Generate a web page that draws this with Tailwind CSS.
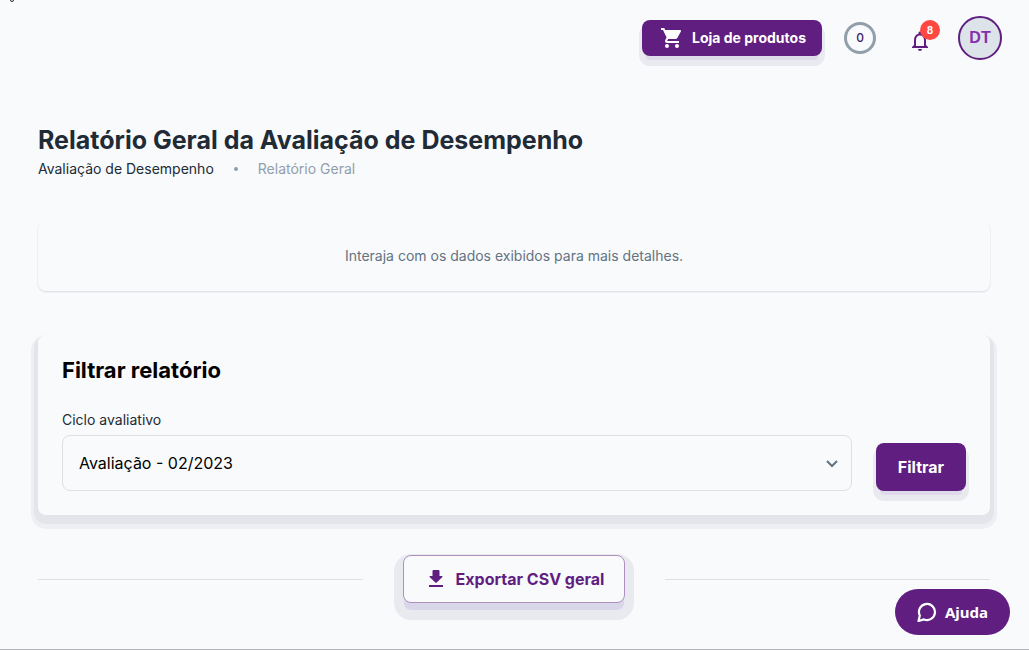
<!DOCTYPE html>
<html lang="pt-BR">
<head>
  <meta charset="UTF-8">
  <meta name="viewport" content="width=device-width, initial-scale=1.0">
  <title>Relatório Geral</title>
  <script src="https://cdn.jsdelivr.net/npm/@tailwindcss/browser@4"></script>
</head>
<body class="relative min-h-screen bg-[#f9fafc] border-b border-[#b4b6ba] font-['Inter',sans-serif] text-[#212b36]">
  <span class="absolute top-[-3px] left-[10px] w-1 h-[5px] border border-[#212b36] rounded-full"></span>

  <header class="flex items-center justify-end h-[76px] pr-[27px]">
    <button class="flex items-center gap-2 h-9 pl-[18px] pr-4 rounded-lg bg-[#5f1e80] text-white text-sm font-bold shadow-[0_8px_0_-4px_#dfdaea,0_7px_0_3px_#e9e9f0]" type="button">
      <svg class="w-6 h-6" viewBox="0 0 24 24" fill="currentColor"><path d="M7 18c-1.100 0-1.990.9-1.990 2S5.900 22 7 22s2-.9 2-2-.9-2-2-2zM1 2v2h2l3.600 7.590-1.350 2.450c-.16.280-.25.610-.25.960 0 1.100.9 2 2 2h12v-2H7.420c-.14 0-.25-.11-.25-.25l.03-.12.9-1.630h7.450c.75 0 1.410-.41 1.750-1.030l3.580-6.490c.08-.14.120-.31.120-.48 0-.55-.45-1-1-1H5.210l-.94-2H1zm16 16c-1.100 0-1.990.9-1.990 2s.89 2 1.990 2 2-.9 2-2-.9-2-2-2z"/></svg>
      Loja de produtos
    </button>
    <span class="flex items-center justify-center w-8 h-8 ml-[22px] border-3 border-[#919eab] rounded-full text-xs font-medium text-[#3f1d63]">0</span>
    <button class="relative w-6 h-6 ml-8 text-[#5f1e80]" type="button" aria-label="Notificações">
      <svg class="w-6 h-6 mt-[3px]" viewBox="0 0 24 24" fill="currentColor"><path d="M12 22c1.100 0 2-.9 2-2h-4c0 1.100.9 2 2 2zm6-6v-5c0-3.070-1.630-5.640-4.500-6.320V4c0-.83-.67-1.500-1.500-1.500s-1.500.67-1.500 1.500v.68C7.640 5.360 6 7.920 6 11v5l-2 2v1h16v-1l-2-2zm-2 1H8v-6c0-2.480 1.510-4.500 4-4.500s4 2.020 4 4.500v6z"/></svg>
      <span class="absolute -top-[6px] left-3 flex items-center justify-center w-5 h-5 rounded-full bg-[#ff4842] text-white text-[10px] font-bold">8</span>
    </button>
    <button class="w-11 h-11 ml-[26px] border-2 border-[#5f1e80] rounded-full bg-[#dce3e9] text-[#8430ad] text-base font-bold font-['Liberation_Sans',sans-serif]" type="button">DT</button>
  </header>

  <main class="pl-[38px] pr-[39px] pt-[46px]">
    <h1 class="text-[25px] leading-9 font-bold">Relatório Geral da Avaliação de Desempenho</h1>
    <nav class="flex items-center text-sm leading-[22px]">
      <a href="#">Avaliação de Desempenho</a>
      <span class="w-1 h-1 mx-5 rounded-full bg-[#919eab]"></span>
      <span class="text-[#919eab]">Relatório Geral</span>
    </nav>

    <div class="mt-[41px] p-6 rounded-lg bg-[#f9fafc] shadow-[0_1px_0_0_#e1e4ea,0_1px_0_1px_#eff0f4] text-center text-sm leading-[22px] text-[#637381]">
      Interaja com os dados exibidos para mais detalhes.
    </div>

    <form class="mt-11 px-6 pt-5 pb-6 rounded-lg bg-[#f9fafc] shadow-[0_5px_0_4px_#e3e5ea,0_7px_0_7px_#eeeff3]">
      <h2 class="mb-6 text-[22px] leading-[30px] font-bold text-black">Filtrar relatório</h2>
      <div class="flex items-end gap-6">
        <div class="grow">
          <label class="block mb-1 text-sm leading-[22px]" for="ciclo">Ciclo avaliativo</label>
          <div class="relative">
            <select class="block w-full h-14 px-4 border border-[#dce0e4] rounded-lg bg-transparent appearance-none text-base text-black" id="ciclo">
              <option>Avaliação - 02/2023</option>
            </select>
            <svg class="absolute right-3 top-[21px] w-4 h-4 text-[#637381] pointer-events-none" viewBox="0 0 16 16" fill="none" stroke="currentColor" stroke-width="2"><path d="M3 5l5 5 5-5"/></svg>
          </div>
        </div>
        <button class="w-[90px] h-12 rounded-lg bg-[#5f1e80] text-white text-base font-bold shadow-[0_8px_0_-4px_#dfdaea,0_7px_0_3px_#e9e9f0]" type="button">Filtrar</button>
      </div>
    </form>

    <div class="flex items-center gap-10 mt-10">
      <div class="grow h-px bg-[#dce0e4]"></div>
      <button class="flex items-center justify-center gap-2 w-[222px] h-12 border border-[#af8fbf] rounded-lg bg-[#f9fafc] text-[#5f1e80] text-base font-bold shadow-[0_8px_0_-1px_#dad6ea,0_8px_0_9px_#e9eaf0]" type="button">
        <svg class="w-6 h-6" viewBox="0 0 24 24" fill="currentColor"><path d="M9.500 3h5a1 1 0 0 1 1 1v5H18a.6.6 0 0 1 .4 1l-5.700 5.500a1 1 0 0 1-1.400 0L5.600 10a.6.6 0 0 1 .4-1h2.500V4a1 1 0 0 1 1-1zM5 18h14v2H5z"/></svg>
        Exportar CSV geral
      </button>
      <div class="grow h-px bg-[#dce0e4]"></div>
    </div>
  </main>

  <button class="fixed right-[19px] bottom-[15px] flex items-center gap-2 h-[46px] px-[22px] rounded-full bg-[#5f1e80] text-white text-[15px] font-bold font-['Noto_Sans',sans-serif]" type="button">
    <svg class="w-5 h-5" viewBox="0 0 20 20" fill="none" stroke="currentColor" stroke-width="2.200" stroke-linejoin="round"><path d="M2.800 13.500A8 8 0 1 1 7 17.400L1.500 19z"/></svg>
    Ajuda
  </button>
</body>
</html>
